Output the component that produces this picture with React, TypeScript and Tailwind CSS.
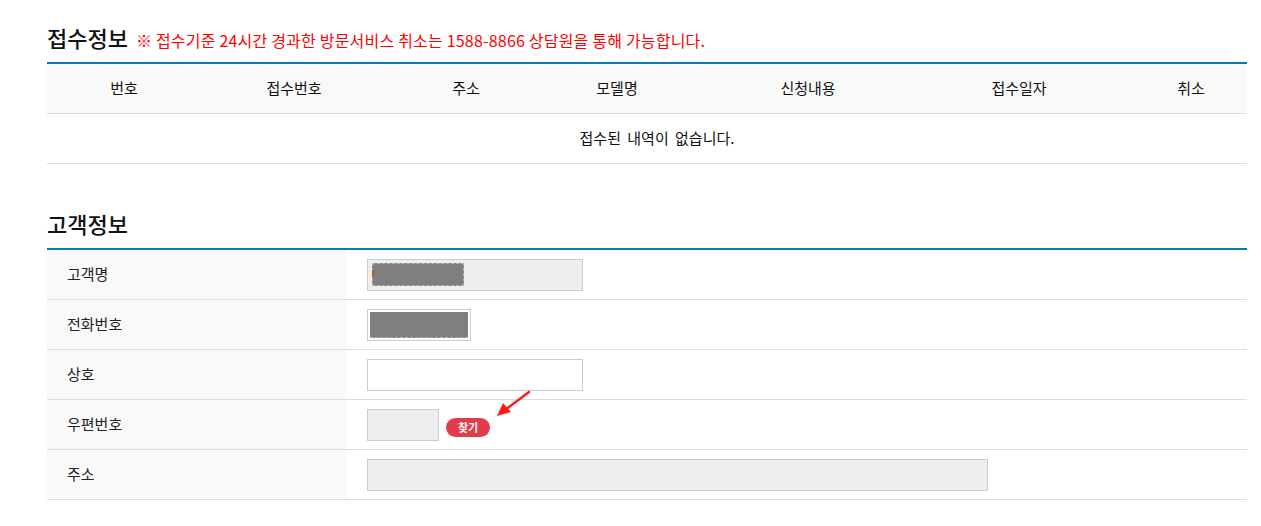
import React from 'react';

const font = { fontFamily: '"Noto Sans CJK KR", "Noto Sans", sans-serif' };

const headers = [
  { label: '번호', w: 'w-[154px]' },
  { label: '접수번호', w: 'w-[186px]' },
  { label: '주소', w: 'w-[158px]' },
  { label: '모델명', w: 'w-[144px]' },
  { label: '신청내용', w: 'w-[238px]' },
  { label: '접수일자', w: 'w-[184px]' },
  { label: '취소', w: 'flex-1 pl-6' },
];

const Row: React.FC<{ label: string; children: React.ReactNode }> = ({ label, children }) => (
  <div className="flex h-[50px] border-b border-[#dddddd]">
    <div className="w-[300px] bg-[#f9f9f9] flex items-center pl-5 text-[15px] text-[#222]">{label}</div>
    <div className="flex-1 flex items-center pl-5 relative">{children}</div>
  </div>
);

const App: React.FC = () => {
  return (
    <div className="w-[1261px] h-[526px] bg-white overflow-hidden" style={font}>
      <div className="ml-[47px] w-[1200px] pt-[22px]">
        {/* 접수정보 */}
        <div className="flex items-baseline h-[30px] mb-[10px]">
          <h2 className="text-[22px] leading-[30px] text-[#111] font-medium">접수정보</h2>
          <span className="ml-2 text-[16px] text-[#ff0000] tracking-[0.2px]">※ 접수기준 24시간 경과한 방문서비스 취소는 1588-8866 상담원을 통해 가능합니다.</span>
        </div>
        <div className="border-t-2 border-[#0f76b8]">
          <div className="flex h-[50px] bg-[#f9f9f9] border-b border-[#dddddd] text-[15px] text-[#111]">
            {headers.map((h) => (
              <div key={h.label} className={`${h.w} flex items-center justify-center`}>
                {h.label}
              </div>
            ))}
          </div>
          <div className="flex h-[50px] items-center justify-center border-b border-[#dddddd] text-[15px] text-[#111] pl-5 [word-spacing:3px]">
            접수된 내역이 없습니다.
          </div>
        </div>

        {/* 고객정보 */}
        <h2 className="mt-[44px] mb-[10px] text-[22px] leading-[30px] text-[#111] font-medium">고객정보</h2>
        <div className="border-t-2 border-[#0f76b8]">
          <Row label="고객명">
            <div className="w-[216px] h-[32px] bg-[#eeeeee] border border-[#cccccc] flex items-center pl-1 relative">
              <div className="w-[92px] h-[23px] bg-[#7f7f7f] border border-dashed border-[#b5b5b5]" />
              <div className="absolute left-[4px] top-[10px] w-[2px] h-[6px] bg-[#c05a00]" />
            </div>
          </Row>
          <Row label="전화번호">
            <div className="w-[104px] h-[32px] bg-white border border-[#cccccc] p-[2px]">
              <div className="w-full h-full bg-[#7f7f7f] border-b border-dashed border-[#b5b5b5]" />
            </div>
          </Row>
          <Row label="상호">
            <div className="w-[216px] h-[32px] bg-white border border-[#cccccc]" />
          </Row>
          <Row label="우편번호">
            <div className="w-[72px] h-[32px] bg-[#eeeeee] border border-[#cccccc]" />
            <button className="ml-[7px] w-[44px] h-[19px] rounded-full bg-[#e23b4b] text-white text-[11px] font-bold leading-[19px] mt-[5px]">
              찾기
            </button>
            <svg className="absolute left-[146px] top-[-10px]" width="40" height="30" viewBox="0 0 40 30">
              <line x1="36" y1="2" x2="12" y2="20" stroke="#ff1a1a" strokeWidth="2.5" strokeLinecap="round" />
              <polygon points="4,26 10,13 18,22" fill="#ff1a1a" />
            </svg>
          </Row>
          <Row label="주소">
            <div className="w-[621px] h-[32px] bg-[#eeeeee] border border-[#cccccc]" />
          </Row>
        </div>
      </div>
    </div>
  );
};

export default App;
